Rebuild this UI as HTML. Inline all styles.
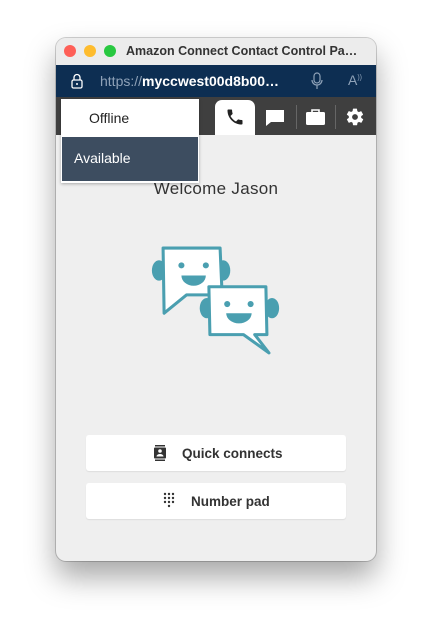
<!DOCTYPE html>
<html><head><meta charset="utf-8"><style>
*{margin:0;padding:0;box-sizing:border-box}
body{width:432px;height:635px;background:#fff;font-family:"Liberation Sans",sans-serif;position:relative;overflow:hidden}
.win{position:absolute;left:56px;top:38px;width:320px;height:523px;border-radius:10px;background:#efefef;overflow:hidden;box-shadow:0 16px 30px rgba(0,0,0,.35),0 0 0 1px rgba(0,0,0,.18)}
.title{position:absolute;left:0;top:0;width:320px;height:27px;background:#ececec;}
.dot{position:absolute;top:7px;width:12px;height:12px;border-radius:50%}
.title .t{position:absolute;left:70px;top:6px;font-size:12.5px;font-weight:bold;color:#333;white-space:nowrap}
.url{position:absolute;top:27px;left:0;width:320px;height:32px;background:#0d2e52}
.url .u{position:absolute;left:44px;top:8px;font-size:14px;color:#8fa2b8;white-space:nowrap}
.url .u b{color:#fff;font-weight:bold}
.tb{position:absolute;top:59px;left:0;width:320px;height:38px;background:#3f3f3f}
.tab{position:absolute;left:159px;top:3px;width:40px;height:35px;background:#fff;border-radius:7px 7px 0 0}
.sep{position:absolute;top:8px;width:1px;height:24px;background:#666}
.dd{position:absolute;left:5px;top:61px;width:138px;height:84px;background:#fff;box-shadow:0 1px 3px rgba(0,0,0,.3)}
.dd .o{position:absolute;left:28px;top:11px;font-size:14px;color:#222}
.dd .a{position:absolute;left:1px;top:38px;width:136px;height:44px;background:#3d4d60;color:#fff;font-size:14px;padding:13px 0 0 12px}
.wel{position:absolute;top:141px;left:0;width:320px;text-align:center;font-size:17px;color:#333;letter-spacing:.3px}
.btn{position:absolute;left:30px;width:260px;height:36px;background:#fff;border-radius:3px;box-shadow:0 1px 1px rgba(0,0,0,.08);font-size:13.5px;font-weight:bold;color:#333}
</style></head><body>
<div class="win">
 <div class="title">
  <div class="dot" style="left:8px;background:#fe5f57"></div>
  <div class="dot" style="left:28px;background:#febc2e"></div>
  <div class="dot" style="left:48px;background:#28c840"></div>
  <div class="t">Amazon Connect Contact Control Pa…</div>
 </div>
 <div class="url">
  <svg style="position:absolute;left:15px;top:8px" width="12" height="16" viewBox="0 0 12 16"><path d="M3 7V4.5a3 3 0 0 1 6 0V7" fill="none" stroke="#fff" stroke-width="1.3"/><rect x="1" y="7" width="10" height="8" rx="1.5" fill="none" stroke="#fff" stroke-width="1.3"/><circle cx="6" cy="11" r="1" fill="#fff"/></svg>
  <div class="u">https://<b>myccwest00d8b00…</b></div>
  <svg style="position:absolute;left:255px;top:7px" width="12" height="18" viewBox="0 0 12 18"><rect x="3" y="1" width="6" height="10" rx="3" fill="none" stroke="#8fa2b8" stroke-width="1.2"/><path d="M1 8a5 5 0 0 0 10 0M6 13v4" fill="none" stroke="#8fa2b8" stroke-width="1.2"/></svg>
  <div style="position:absolute;left:292px;top:7px;font-size:14px;color:#8fa2b8">A<sup style="font-size:7px">))</sup></div>
 </div>
 <div class="tb">
  <div class="tab"><svg style="position:absolute;left:10px;top:7px" width="20" height="20" viewBox="0 0 24 24"><path d="M6.6 10.8c1.4 2.8 3.8 5.1 6.6 6.6l2.2-2.2c.3-.3.7-.4 1-.2 1.1.4 2.300.6 3.6.6.6 0 1 .4 1 1V20c0 .6-.4 1-1 1C10.6 21 3 13.4 3 4c0-.6.4-1 1-1h3.5c.6 0 1 .4 1 1 0 1.3.2 2.5.6 3.6.1.3 0 .7-.2 1z" fill="#222"/></svg></div>
  <svg style="position:absolute;left:209px;top:12px" width="20" height="18" viewBox="0 0 20 18"><path d="M1 1h18v12H6l-5 4z" fill="#fff"/></svg>
  <div class="sep" style="left:240px"></div>
  <svg style="position:absolute;left:250px;top:11px" width="19" height="17" viewBox="0 0 19 17"><path d="M6 4V2h7v2" fill="none" stroke="#fff" stroke-width="1.6"/><rect x="0" y="4" width="19" height="13" rx="1.5" fill="#fff"/></svg>
  <div class="sep" style="left:279px"></div>
  <svg style="position:absolute;left:289px;top:10px" width="20" height="20" viewBox="0 0 24 24"><path fill="#fff" d="M19.4 13c.04-.3.06-.6.06-1s-.02-.7-.06-1l2.1-1.6c.2-.15.24-.4.12-.6l-2-3.5c-.12-.2-.38-.3-.6-.2l-2.5 1c-.5-.4-1.100-.7-1.700-1l-.4-2.600C14.400 2.200 14.200 2 14 2h-4c-.25 0-.45.2-.5.4l-.4 2.6c-.6.3-1.2.6-1.7 1l-2.5-1c-.2-.1-.5 0-.6.2l-2 3.5c-.1.2-.06.45.12.6L4.6 11c-.04.3-.06.7-.06 1s.02.7.06 1l-2.1 1.6c-.2.15-.24.4-.12.6l2 3.5c.12.2.38.3.6.2l2.5-1c.5.4 1.1.7 1.7 1l.4 2.6c.05.24.25.4.5.4h4c.25 0 .45-.2.5-.4l.4-2.6c.6-.3 1.2-.6 1.7-1l2.5 1c.2.1.5 0 .6-.2l2-3.5c.12-.2.06-.45-.12-.6zM12 15.5A3.5 3.5 0 1 1 12 8.5a3.5 3.5 0 0 1 0 7z"/></svg>
 </div>
 <div class="wel">Welcome Jason</div>
 <svg style="position:absolute;left:94px;top:206px" width="130" height="114" viewBox="0 0 126 112">
  <g fill="#4a9fb0">
   <ellipse cx="8" cy="26" rx="7" ry="10"/><ellipse cx="71" cy="26" rx="7" ry="10"/>
   <ellipse cx="55" cy="63" rx="7" ry="10"/><ellipse cx="119" cy="63" rx="7" ry="10"/>
  </g>
  <path d="M12 4h56l2 46H35L13 68z" fill="#fff" stroke="#4a9fb0" stroke-width="3" stroke-linejoin="round"/>
  <path d="M57 42h56l1 47h-12l14 18-25-18H58z" fill="#fff" stroke="#4a9fb0" stroke-width="3" stroke-linejoin="round"/>
  <g fill="#4a9fb0">
   <circle cx="30" cy="21" r="3"/><circle cx="54" cy="21" r="3"/>
   <path d="M30 31h24a12 10 0 0 1-24 0z"/>
   <circle cx="75" cy="59" r="3"/><circle cx="98" cy="59" r="3"/>
   <path d="M74 68h25a12.5 10 0 0 1-25 0z"/>
  </g>
 </svg>
 <div class="btn" style="top:397px">
  <svg style="position:absolute;left:68px;top:10px" width="12" height="16" viewBox="0 0 12 16"><rect x="1" y="0" width="10" height="1.5" fill="#333"/><rect x="0" y="2.5" width="12" height="11" rx="1" fill="#333"/><rect x="1" y="14.5" width="10" height="1.5" fill="#333"/><circle cx="6" cy="6" r="1.8" fill="#fff"/><path d="M2.5 11.5a3.5 2.5 0 0 1 7 0z" fill="#fff"/></svg>
  <span style="position:absolute;left:96px;top:11px">Quick connects</span>
 </div>
 <div class="btn" style="top:445px">
  <svg style="position:absolute;left:77px;top:9px" width="14" height="18" viewBox="0 0 14 18"><g fill="#333"><circle cx="2" cy="2" r="1.2"/><circle cx="6" cy="2" r="1.2"/><circle cx="10" cy="2" r="1.2"/><circle cx="2" cy="6" r="1.2"/><circle cx="6" cy="6" r="1.2"/><circle cx="10" cy="6" r="1.2"/><circle cx="2" cy="10" r="1.2"/><circle cx="6" cy="10" r="1.2"/><circle cx="10" cy="10" r="1.2"/><circle cx="6" cy="14" r="1.2"/></g></svg>
  <span style="position:absolute;left:105px;top:11px">Number pad</span>
 </div>
 <div class="dd"><div class="o">Offline</div><div class="a">Available</div></div>
</div>
</body></html>
